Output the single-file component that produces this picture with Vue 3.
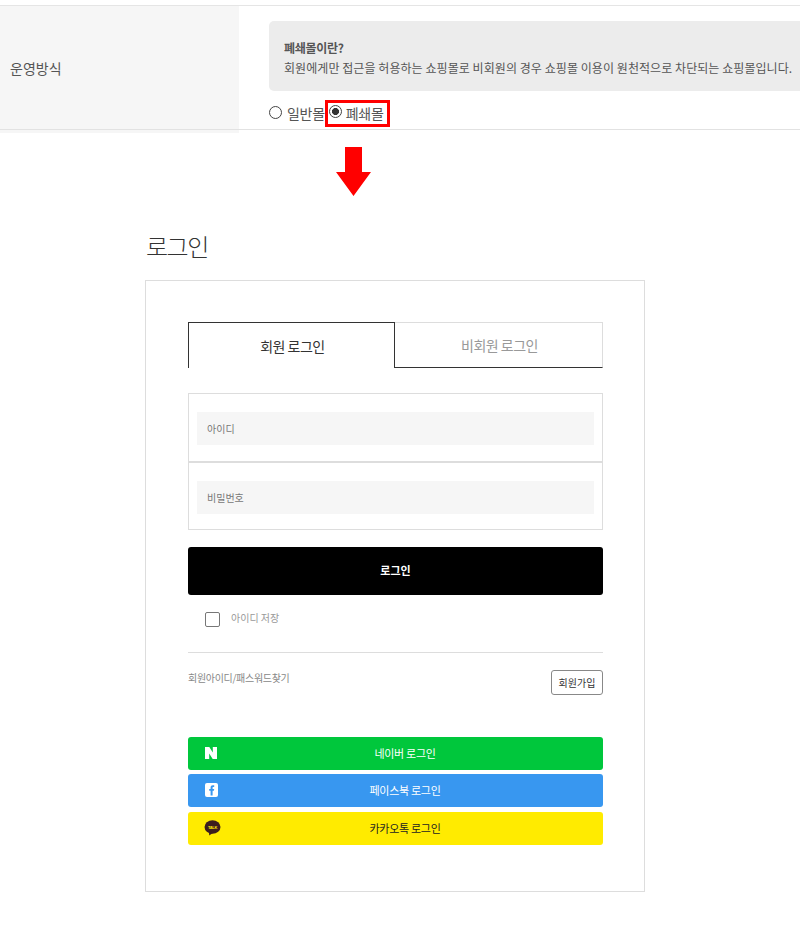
<template>
  <div class="page">
    <section class="setting">
      <div class="label">운영방식</div>
      <div class="value">
        <div class="notice">
          <strong>폐쇄몰이란?</strong>
          <p>회원에게만 접근을 허용하는 쇼핑몰로 비회원의 경우 쇼핑몰 이용이 원천적으로 차단되는 쇼핑몰입니다.</p>
        </div>
        <div class="radios">
          <span class="radio first"></span>
          <span class="radio-text">일반몰</span>
          <span class="picked">
            <span class="radio on"></span>
            <span class="radio-text">폐쇄몰</span>
          </span>
        </div>
      </div>
    </section>

    <div class="arrow-wrap">
      <svg width="35" height="49" viewBox="0 0 35 49"><path d="M9 0H26V25H35L17.5 49L0 25H9Z" fill="#ff0000" /></svg>
    </div>

    <main class="login">
      <h1>로그인</h1>
      <div class="card">
        <div class="tabs">
          <div class="tab active">회원 로그인</div>
          <div class="tab">비회원 로그인</div>
        </div>

        <div class="fields">
          <div class="field"><div class="input">아이디</div></div>
          <div class="field second"><div class="input">비밀번호</div></div>
        </div>

        <button class="submit">로그인</button>

        <label class="save">
          <span class="check"></span>
          <span class="save-text">아이디 저장</span>
        </label>

        <div class="links">
          <span class="find">회원아이디/패스워드찾기</span>
          <button class="join">회원가입</button>
        </div>

        <div class="socials">
          <div class="social naver">
            <svg class="icon" width="12" height="12" viewBox="0 0 12 12"><path d="M0 0H4.3L7.8 5.4V0H12V12H7.7L4.2 6.6V12H0Z" fill="#fff" /></svg>
            네이버 로그인
          </div>
          <div class="social facebook">
            <svg class="icon" width="13" height="14" viewBox="0 0 13 14"><rect width="13" height="14" rx="2" fill="#fff" /><path d="M5.6 12.5V7.8H4.2V6H5.6V4.6C5.6 3.1 6.5 2.3 7.8 2.3H9.2V4H8.3C7.7 4 7.6 4.3 7.6 4.8V6H9.2L8.9 7.8H7.6V12.5Z" fill="#3897f0" /></svg>
            페이스북 로그인
          </div>
          <div class="social kakao">
            <svg class="icon kakao-icon" width="17" height="16" viewBox="0 0 17 16">
              <ellipse cx="8.5" cy="7" rx="8" ry="6.8" fill="#3c1e1e" />
              <path d="M5 11L5.2 15.5L9.5 12.5Z" fill="#3c1e1e" />
              <text x="8.5" y="8.8" text-anchor="middle" class="talk">TALK</text>
            </svg>
            카카오톡 로그인
          </div>
        </div>
      </div>
    </main>
  </div>
</template>

<script setup>
</script>

<style>
html, body { margin: 0; background: #fff; }
</style>

<style scoped>
.page {
  width: 800px;
  height: 929px;
  overflow: hidden;
  font-family: "Noto Sans CJK KR", "Noto Sans", sans-serif;
  color: #333;
}
p, h1 { margin: 0; }

.setting {
  position: relative;
  display: flex;
  margin-top: 5px;
  border-top: 1px solid #e5e5e5;
  height: 127px;
}
.setting::after {
  content: "";
  position: absolute;
  left: 0;
  right: 0;
  top: 123px;
  height: 1px;
  background: #e2e2e2;
}
.label {
  flex: none;
  width: 239px;
  background: #f6f6f6;
  box-sizing: border-box;
  padding: 51px 0 0 10px;
  font-size: 14px;
  line-height: 22px;
  color: #555;
}
.value { padding: 15px 0 0 30px; }
.notice {
  width: 560px;
  height: 70px;
  box-sizing: border-box;
  padding: 17px 15px 0;
  background: #ececec;
  border-radius: 5px;
  font-size: 12px;
  line-height: 20px;
  color: #555;
  white-space: nowrap;
}
.notice strong { display: block; font-weight: 700; letter-spacing: -0.3px; }
.notice p { letter-spacing: 0.06px; }
.radios {
  display: flex;
  align-items: center;
  height: 27px;
  margin-top: 9px;
  font-size: 14px;
  color: #555;
}
.radio {
  width: 11px;
  height: 11px;
  border: 1px solid #444;
  border-radius: 50%;
  background: #fff;
  flex: none;
}
.radio.first { margin-bottom: 2px; }
.radio.on { margin-bottom: 4px; }
.radio-text { margin: 0 0 2px 5px; letter-spacing: -0.3px; }
.picked .radio-text { margin-left: 4px; }
.radio.on {
  background: radial-gradient(circle, #333 0 3.2px, #fff 3.8px);
}
.picked {
  display: flex;
  align-items: center;
  width: 65px;
  height: 27px;
  box-sizing: border-box;
  border: 3px solid #f00;
  padding-left: 1px;
}

.arrow-wrap {
  display: flex;
  height: 49px;
  padding-left: 336px;
  margin-top: 14px;
}

.login { padding: 36px 0 0 145px; }
h1 {
  font-size: 24px;
  font-weight: 300;
  line-height: 28px;
  color: #333;
  padding-left: 1px;
  letter-spacing: -1.5px;
}
.card {
  width: 500px;
  height: 612px;
  margin-top: 20px;
  box-sizing: border-box;
  border: 1px solid #ddd;
  padding: 41px 41px 0 42px;
}
.tabs { display: flex; height: 46px; }
.tab {
  flex: 1;
  box-sizing: border-box;
  padding-left: 2px;
  border-top: 1px solid #ddd;
  border-right: 1px solid #ddd;
  border-bottom: 1px solid #333;
  display: flex;
  align-items: center;
  justify-content: center;
  font-size: 14px;
  letter-spacing: -0.5px;
  color: #999;
}
.tab.active {
  flex: none;
  width: 207px;
  border: 1px solid #333;
  border-bottom: 0;
  color: #333;
}
.fields {
  margin-top: 25px;
  height: 137px;
  box-sizing: border-box;
  border: 1px solid #ddd;
}
.field { height: 67px; padding: 18px 8px 0; box-sizing: border-box; }
.field.second { border-top: 2px solid #ddd; padding-top: 18px; height: 68px; }
.input {
  height: 33px;
  background: #f6f6f6;
  padding-left: 10px;
  font-size: 10px;
  line-height: 33px;
  color: #777;
}
.submit {
  display: block;
  width: 100%;
  height: 48px;
  margin-top: 17px;
  padding: 0 0 2px;
  border: 0;
  border-radius: 3px;
  background: #000;
  color: #fff;
  font: 700 11px "Noto Sans CJK KR", sans-serif;
}
.save {
  display: flex;
  align-items: center;
  gap: 11px;
  height: 15px;
  margin: 17px 0 0 17px;
  font-size: 10px;
  color: #999;
}
.save-text { margin-bottom: 4px; }
.check {
  width: 13px;
  height: 13px;
  border: 1px solid #777;
  border-radius: 2px;
  flex: none;
}
.links {
  display: flex;
  justify-content: space-between;
  align-items: flex-start;
  height: 85px;
  margin-top: 25px;
  border-top: 1px solid #ddd;
  box-sizing: border-box;
  padding-top: 17px;
}
.find { font-size: 10px; line-height: 16px; color: #888; letter-spacing: -0.3px; }
.join {
  width: 52px;
  height: 25px;
  padding: 0;
  background: #fff;
  border: 1px solid #888;
  border-radius: 3px;
  font: 400 10px "Noto Sans CJK KR", sans-serif;
  color: #333;
}
.socials { display: flex; flex-direction: column; }
.social {
  position: relative;
  height: 33px;
  border-radius: 3px;
  display: flex;
  align-items: center;
  justify-content: center;
  box-sizing: border-box;
  padding: 0 0 2px 19px;
  font-size: 11px;
  letter-spacing: -0.3px;
  color: #fff;
}
.facebook { margin-top: 4px; background: #3897f0; }
.naver { background: #00c73c; }
.kakao { margin-top: 5px; background: #ffeb00; color: #222; }
.icon { position: absolute; left: 17px; top: 10px; }
.facebook .icon { top: 9px; }
.kakao-icon { left: 16px; top: 8px; }
.talk { font: 700 4px "Liberation Sans", sans-serif; fill: #ffeb00; }
</style>
